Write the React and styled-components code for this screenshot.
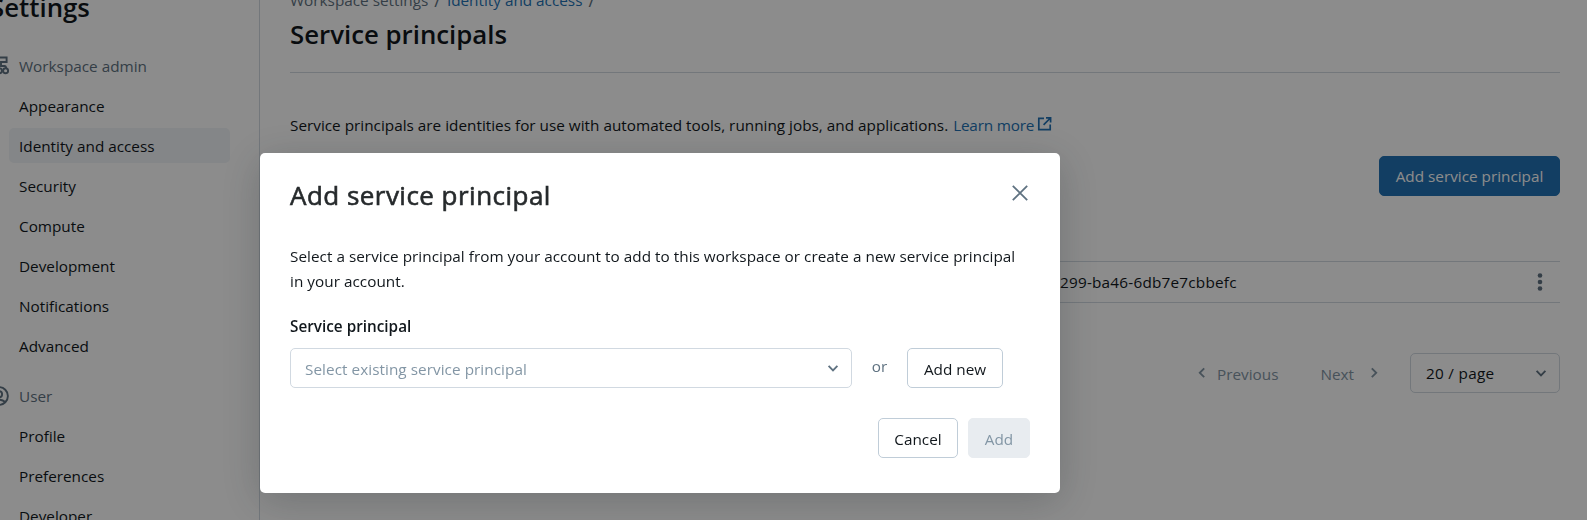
import React from "react";
import styled, { createGlobalStyle, css } from "styled-components";

const color = {
  text: "#11171c",
  secondary: "#5f7281",
  placeholder: "#8396a5",
  link: "#2272b4",
  border: "#d1d9e1",
  buttonBorder: "#c0cdd8",
  disabledBg: "#e8ecf0",
};

const GlobalStyle = createGlobalStyle`
  *, *::before, *::after { box-sizing: border-box; }
  body {
    margin: 0;
    background: #fff;
    color: ${color.text};
    font: 400 15.3px/25px "Open Sans", "Noto Sans", sans-serif;
    overflow: hidden;
  }
  svg { display: block; flex: none; }
`;

const Page = styled.div`
  display: flex;
  height: 520px;
  overflow: hidden;
`;

const Sidebar = styled.nav`
  flex: none;
  width: 260px;
  border-right: 1px solid ${color.border};
  padding: 0 29px 0 9px;
`;

const SidebarTitle = styled.h1`
  margin: -13px 0 21px -19px;
  font-size: 25.8px;
  font-weight: 600;
  line-height: 40px;
`;

const NavGroup = styled.section`
  display: flex;
  flex-direction: column;
  gap: 5px;
  margin-bottom: 15px;
`;

const NavHeader = styled.div`
  display: flex;
  align-items: center;
  gap: 10px;
  height: 35px;
  margin-left: -20px;
  color: ${color.secondary};

  span { padding-top: 2px; }
`;

const NavItem = styled.a`
  height: 35px;
  padding: 1px 10px 0;
  border-radius: 5px;
  line-height: 35px;
  background: ${({ $active }) => ($active ? "#f1f4f7" : "transparent")};
`;

const Main = styled.main`
  flex: 1;
  min-width: 0;
  padding: 0 27px 0 30px;
`;

const Breadcrumb = styled.div`
  display: flex;
  gap: 6px;
  margin-top: -12px;
  color: ${color.secondary};
`;

const Separator = styled.span`
  font-size: 18px;
`;

const Link = styled.a`
  color: ${color.link};
`;

const LearnMore = styled(Link)`
  display: inline-flex;
  gap: 3px;
  letter-spacing: -0.2px;

  svg { margin-top: 3px; }
`;

const PageTitle = styled.h2`
  margin: 0;
  padding: 1px 0 18px;
  border-bottom: 1px solid ${color.border};
  font-size: 25.8px;
  font-weight: 600;
  line-height: 40px;
`;

const Intro = styled.p`
  display: flex;
  gap: 5px;
  margin: 40px 0 18px;
  letter-spacing: 0.01px;
`;

const Toolbar = styled.div`
  display: flex;
  justify-content: flex-end;
`;

const Button = styled.button`
  height: 40px;
  padding: 2px 14px 0;
  border: 1px solid ${color.buttonBorder};
  border-radius: 5px;
  background: #fff;
  color: ${color.text};
  font: inherit;
  white-space: nowrap;
  width: ${({ $width }) => $width}px;

  ${({ $variant }) =>
    $variant === "primary" &&
    css`
      padding-top: 0;
      background: ${color.link};
      border-color: ${color.link};
      color: #fff;
    `}

  &:disabled {
    background: ${color.disabledBg};
    border-color: ${color.disabledBg};
    color: ${color.placeholder};
  }
`;

const TableRow = styled.div`
  display: flex;
  align-items: center;
  justify-content: space-between;
  height: 42px;
  margin-top: 65px;
  padding: 1px 11px 0 770px;
  border: solid ${color.border};
  border-width: 1px 0;
  letter-spacing: 0.22px;
`;

const Pagination = styled.div`
  display: flex;
  align-items: center;
  justify-content: flex-end;
  margin-top: 50px;
`;

const PageStep = styled.span`
  display: flex;
  align-items: center;
  gap: ${({ $gap }) => $gap}px;
  margin-right: ${({ $after }) => $after}px;
  color: ${color.placeholder};

  span { padding-top: 2px; }
`;

const Select = styled.div`
  display: flex;
  align-items: center;
  justify-content: space-between;
  width: ${({ $width }) => $width}px;
  height: 40px;
  padding: 0 8px 0 ${({ $placeholder }) => ($placeholder ? 14 : 15)}px;
  border: 1px solid ${color.border};
  border-radius: 5px;
  color: ${({ $placeholder }) => ($placeholder ? color.placeholder : color.text)};
  letter-spacing: ${({ $placeholder }) => ($placeholder ? 0.05 : 0.3)}px;

  span { padding-top: ${({ $placeholder }) => ($placeholder ? 2 : 1)}px; }
  svg { color: ${color.secondary}; }
`;

const Overlay = styled.div`
  position: fixed;
  inset: 0;
  background: rgba(0, 0, 0, 0.45);
`;

const Dialog = styled.div`
  display: flex;
  flex-direction: column;
  width: 800px;
  height: 340px;
  margin: 153px 0 0 260px;
  padding: 20px 30px 35px;
  border-radius: 5px;
  background: #fff;
  box-shadow: 0 8px 40px rgba(31, 39, 45, 0.25);
`;

const DialogHeader = styled.header`
  display: flex;
  align-items: center;
  justify-content: space-between;
  height: 40px;
`;

const DialogTitle = styled.h3`
  margin: 4px 0 0;
  color: #262a2c;
  font-size: 26px;
  font-weight: 400;
  line-height: 40px;
  letter-spacing: 0.47px;
  -webkit-text-stroke: 0.6px #262a2c;
`;

const CloseButton = styled.button`
  padding: 0;
  border: 0;
  background: none;
  color: ${color.secondary};
`;

const DialogText = styled.p`
  margin: 31px 0 20px;
  letter-spacing: 0.03px;
`;

const Label = styled.label`
  margin-bottom: 9px;
  font-weight: 600;
  line-height: 25px;
`;

const Field = styled.div`
  display: flex;
  align-items: center;
`;

const Or = styled.span`
  width: 55px;
  padding-bottom: 4px;
  color: ${color.secondary};
  text-align: center;
`;

const DialogFooter = styled.footer`
  display: flex;
  justify-content: flex-end;
  gap: 10px;
  margin-top: 30px;
`;

const Stroke = ({ width = 1.9, children }) => (
  <svg width="20" height="20" viewBox="0 0 20 20" fill="none" stroke="currentColor" strokeWidth={width}>
    {children}
  </svg>
);

const ChevronDown = () => (
  <Stroke><path d="M5.6 7.9 10 12.3l4.4-4.4" /></Stroke>
);
const ChevronLeft = () => (
  <Stroke><path d="M12.2 5.4 7.8 9.8l4.4 4.4" /></Stroke>
);
const ChevronRight = () => (
  <Stroke><path d="M7.8 5.4 12.2 9.8l-4.4 4.4" /></Stroke>
);
const CloseIcon = () => (
  <Stroke width={1.8}><path d="M2.8 2.8 17.2 17.2M17.2 2.8 2.8 17.2" /></Stroke>
);
const ExternalIcon = () => (
  <svg width="16" height="16" viewBox="0 0 16 16" fill="none" stroke="currentColor" strokeWidth="1.7">
    <path d="M7 2.3H1.8v11.4h11.4V8.5M6.6 8.9 13.4 2M9 1.8h4.6v4.6" />
  </svg>
);
const OverflowIcon = () => (
  <svg width="18" height="20" viewBox="0 0 18 20" fill={color.secondary}>
    <circle cx="9" cy="2.5" r="2.3" />
    <circle cx="9" cy="9" r="2.3" />
    <circle cx="9" cy="15.5" r="2.3" />
  </svg>
);
const WorkspaceIcon = () => (
  <Stroke>
    <path d="M3 1.5h14.6V6H12v4h3.5q1.5 0 1.8 2.5" />
    <circle cx="10.4" cy="14.8" r="2.5" />
    <circle cx="16.6" cy="14.8" r="2.5" />
  </Stroke>
);
const UserIcon = () => (
  <Stroke>
    <circle cx="10" cy="10" r="8.9" />
    <circle cx="10" cy="8.2" r="3.1" />
    <path d="M3.8 16c3.6-3 8.8-3 12.4 0" />
  </Stroke>
);

const adminItems = ["Appearance", "Identity and access", "Security", "Compute", "Development", "Notifications", "Advanced"];
const userItems = ["Profile", "Preferences", "Developer"];

function NavSection({ icon, title, items, active }) {
  return (
    <NavGroup>
      <NavHeader>{icon}<span>{title}</span></NavHeader>
      {items.map((item) => (
        <NavItem key={item} $active={item === active}>{item}</NavItem>
      ))}
    </NavGroup>
  );
}

export default function App() {
  return (
    <>
      <GlobalStyle />
      <Page>
        <Sidebar>
          <SidebarTitle>Settings</SidebarTitle>
          <NavSection icon={<WorkspaceIcon />} title="Workspace admin" items={adminItems} active="Identity and access" />
          <NavSection icon={<UserIcon />} title="User" items={userItems} />
        </Sidebar>
        <Main>
          <Breadcrumb>
            <span>Workspace settings</span>
            <Separator>/</Separator>
            <Link>Identity and access</Link>
            <Separator>/</Separator>
          </Breadcrumb>
          <PageTitle>Service principals</PageTitle>
          <Intro>
            <span>Service principals are identities for use with automated tools, running jobs, and applications.</span>
            <LearnMore>Learn more <ExternalIcon /></LearnMore>
          </Intro>
          <Toolbar>
            <Button $variant="primary" $width={181}>Add service principal</Button>
          </Toolbar>
          <TableRow>
            <span>299-ba46-6db7e7cbbefc</span>
            <OverflowIcon />
          </TableRow>
          <Pagination>
            <PageStep $gap={5} $after={42}><ChevronLeft /><span>Previous</span></PageStep>
            <PageStep $gap={10} $after={26}><span>Next</span><ChevronRight /></PageStep>
            <Select $width={150}><span>20 / page</span><ChevronDown /></Select>
          </Pagination>
        </Main>
      </Page>
      <Overlay>
        <Dialog role="dialog">
          <DialogHeader>
            <DialogTitle>Add service principal</DialogTitle>
            <CloseButton aria-label="Close"><CloseIcon /></CloseButton>
          </DialogHeader>
          <DialogText>
            Select a service principal from your account to add to this workspace or create a new service principal in your account.
          </DialogText>
          <Label>Service principal</Label>
          <Field>
            <Select $width={562} $placeholder><span>Select existing service principal</span><ChevronDown /></Select>
            <Or>or</Or>
            <Button $width={96}>Add new</Button>
          </Field>
          <DialogFooter>
            <Button $width={80}>Cancel</Button>
            <Button $width={62} disabled>Add</Button>
          </DialogFooter>
        </Dialog>
      </Overlay>
    </>
  );
}
